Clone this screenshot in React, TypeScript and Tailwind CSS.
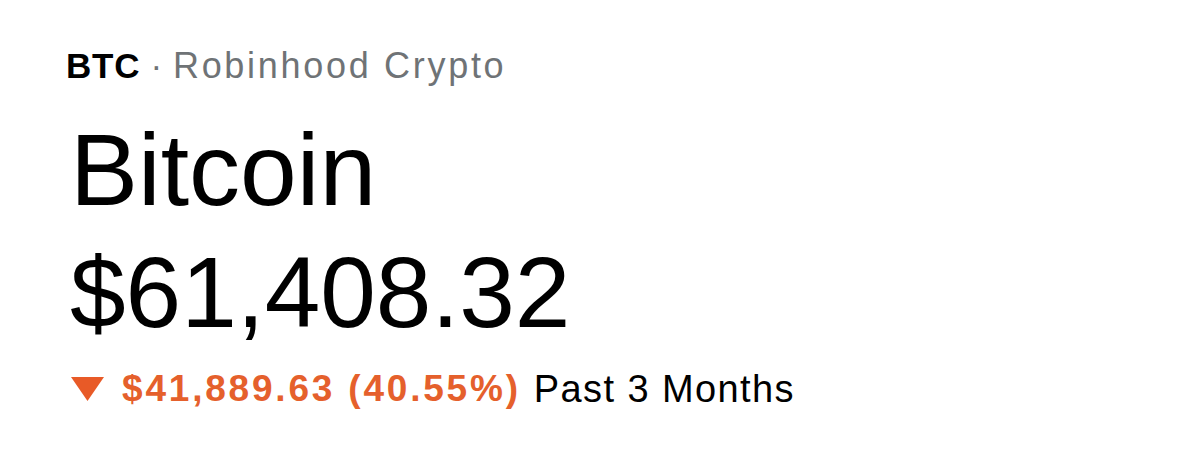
export default function App() {
  return (
    <div className="min-h-screen w-full bg-white pl-[65px] pt-[46px] font-['Liberation_Sans',Arial,sans-serif] text-black">
      <div className="ml-[1px] flex items-baseline text-[35px] leading-[40px]">
        <span className="font-bold tracking-[0.8px]">BTC</span>
        <span className="whitespace-pre text-[#6f7376] tracking-[0.5px]"> · </span>
        <span className="text-[36px] text-[#6f7376] tracking-[2.7px]">Robinhood Crypto</span>
      </div>

      <h1 className="ml-[5px] mt-[32px] text-[102px] leading-[105px]">Bitcoin</h1>

      <div className="ml-[5px] mt-[20px] text-[100px] leading-[99px]">$61,408.32</div>

      <div className="mt-[27px] flex items-center text-[38px] leading-[40px]">
        <svg viewBox="0 0 33 24" className="ml-[6px] mr-[18px] h-[24px] w-[33px]" aria-hidden="true">
          <polygon points="0,0 33,0 16.5,24" fill="#e85a27" />
        </svg>
        <span className="text-[37px] font-bold tracking-[2.8px] text-[#e5602c]">$41,889.63 (40.55%)</span>
        <span className="ml-[13px] tracking-[1.4px]">Past 3 Months</span>
      </div>
    </div>
  );
}
